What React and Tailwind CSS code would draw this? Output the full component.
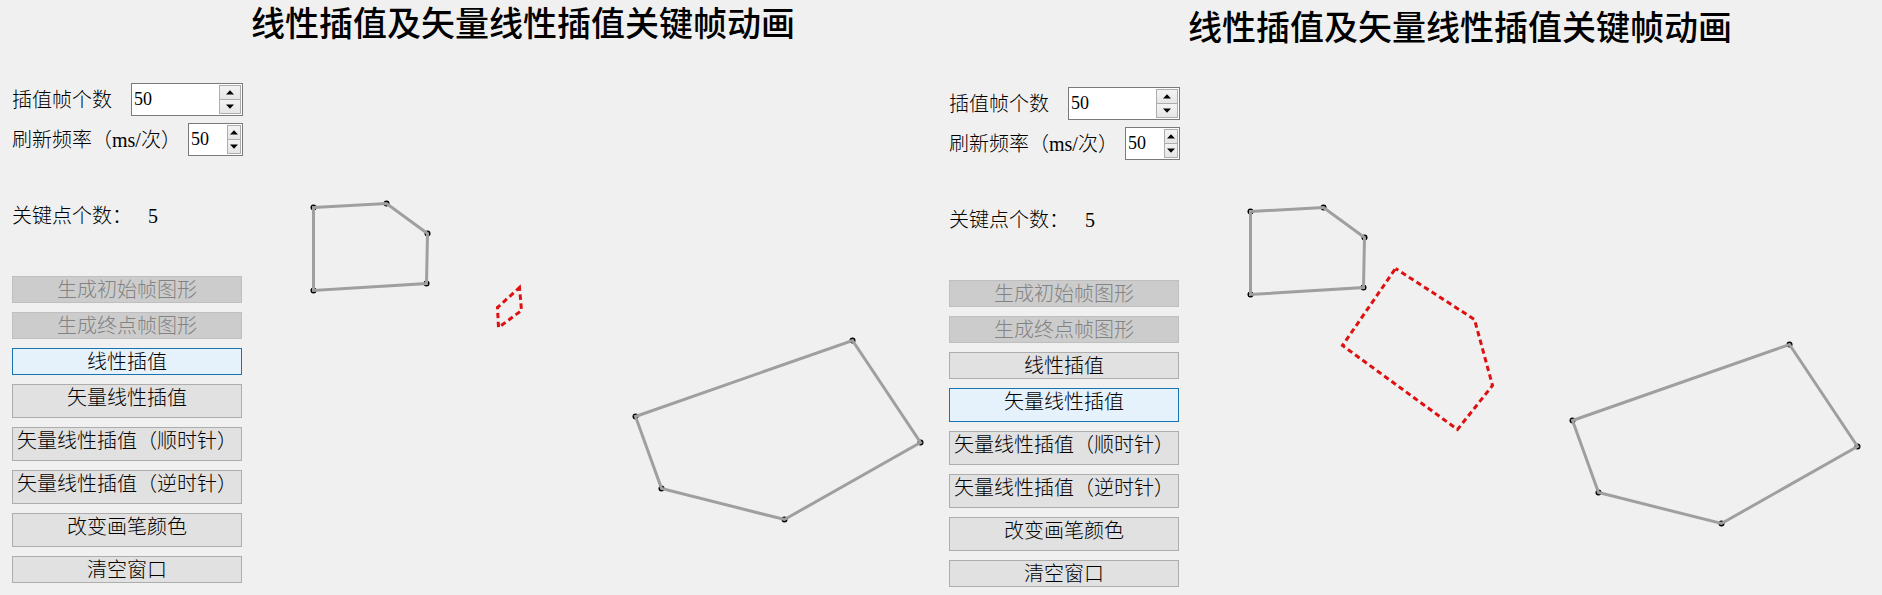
import { useState } from 'react'

const START = [[313, 207], [386, 203], [427, 233], [426, 283], [313, 290]]
const END = [[635, 416], [852, 340], [920, 442], [784, 519], [661, 488]]

const ACTIONS = [
  { label: '生成初始帧图形', disabled: true },
  { label: '生成终点帧图形', disabled: true },
  { label: '线性插值' },
  { label: '矢量线性插值', tall: true },
  { label: '矢量线性插值（顺时针）', tall: true },
  { label: '矢量线性插值（逆时针）', tall: true },
  { label: '改变画笔颜色', tall: true },
  { label: '清空窗口' },
]

const toPoints = (list) => list.map((p) => p.join(',')).join(' ')

function KeyShape({ points }) {
  return (
    <g>
      {points.map(([x, y]) => (
        <circle key={`${x}-${y}`} cx={x} cy={y} r="3" fill="#000000" />
      ))}
      <polygon points={toPoints(points)} fill="none" stroke="#9f9f9f" strokeWidth="3" />
    </g>
  )
}

function Spin({ id, label, wide }) {
  const [value, setValue] = useState(50)
  const step =
    'flex h-[15px] items-center justify-center border border-[#adadad] bg-linear-to-b from-[#f3f3f3] to-[#e6e6e6]'
  return (
    <div className="flex items-center justify-between">
      <label htmlFor={id} className="whitespace-nowrap">
        {label}
      </label>
      <div
        className={`flex h-[33px] border border-[#7a7a7a] bg-white p-px ${wide ? 'w-[112px]' : 'w-[55px]'}`}
      >
        <input
          id={id}
          type="number"
          value={value}
          onChange={(e) => setValue(Number(e.target.value))}
          className="min-w-0 flex-1 appearance-none bg-transparent pb-0.5 pl-px font-['Liberation_Serif',serif] text-[18px] font-normal outline-none [appearance:textfield] [&::-webkit-inner-spin-button]:appearance-none"
        />
        <div className={`flex flex-col ${wide ? 'w-[22px]' : 'w-[14px]'}`}>
          <button type="button" aria-label="增加" onClick={() => setValue(value + 1)} className={step}>
            <svg width="8" height="5" viewBox="0 0 8 5" className="shrink-0">
              <path d="M4 0.2 8 4.6H0z" />
            </svg>
          </button>
          <button
            type="button"
            aria-label="减少"
            onClick={() => setValue(value - 1)}
            className={`-mt-px ${step}`}
          >
            <svg width="8" height="5" viewBox="0 0 8 5" className="shrink-0">
              <path d="M0 0.4h8L4 4.8z" />
            </svg>
          </button>
        </div>
      </div>
    </div>
  )
}

function ActionButton({ label, disabled, tall, active, onClick }) {
  const tone = disabled
    ? 'border-[#bfbfbf] bg-[#cccccc] text-[#838383]'
    : active
      ? 'border-[#1874b0] bg-[#e5f1fb]'
      : 'border-[#adadad] bg-[#e1e1e1]'
  return (
    <button
      type="button"
      disabled={disabled}
      onClick={onClick}
      className={`mr-px flex items-start justify-center border leading-[27px] whitespace-nowrap ${tall ? 'h-[34px]' : 'h-[27px]'} ${tone}`}
    >
      {label}
    </button>
  )
}

function Panel({ id, initial, frame, className }) {
  const [active, setActive] = useState(initial)
  return (
    <section className={className}>
      <h1 className="pt-[5px] pl-[251px] text-[34px] leading-10 font-medium whitespace-nowrap">
        线性插值及矢量线性插值关键帧动画
      </h1>
      <div className="mt-[38px] flex">
        <div className="ml-3 flex w-[231px] shrink-0 flex-col text-[20px] leading-[30px] font-light">
          <div className="flex flex-col gap-[7px]">
            <Spin id={`${id}-frames`} label="插值帧个数" wide />
            <Spin id={`${id}-rate`} label="刷新频率（ms/次）" />
          </div>
          <p className="mt-[45px] flex">
            <span className="w-[136px]">关键点个数：</span>
            <span>5</span>
          </p>
          <div className="mt-[45px] flex flex-col gap-[9px]">
            {ACTIONS.map((a) => (
              <ActionButton
                key={a.label}
                {...a}
                active={a.label === active}
                onClick={() => setActive(a.label)}
              />
            ))}
          </div>
        </div>
        <svg className="min-w-0 flex-1 overflow-visible" aria-hidden="true">
          <g transform="translate(-242.5 -82.5)">
            <KeyShape points={START} />
            <KeyShape points={END} />
            <polygon
              points={toPoints(frame)}
              fill="none"
              stroke="#de1010"
              strokeWidth="3"
              strokeDasharray="5.4 3.6"
              strokeDashoffset="2"
            />
          </g>
        </svg>
      </div>
    </section>
  )
}

export default function App() {
  return (
    <main className="grid min-h-screen grid-cols-[937fr_945fr] overflow-hidden bg-[#f0f0f0] font-['Liberation_Serif','Noto_Sans_CJK_SC',serif] text-black">
      <Panel
        id="linear"
        initial="线性插值"
        frame={[[519, 287], [521, 310], [498, 327], [497, 307]]}
      />
      <Panel
        id="vector"
        initial="矢量线性插值"
        className="pt-1"
        frame={[[458, 264], [537, 315], [555, 381], [520, 425], [405, 341]]}
      />
    </main>
  )
}
